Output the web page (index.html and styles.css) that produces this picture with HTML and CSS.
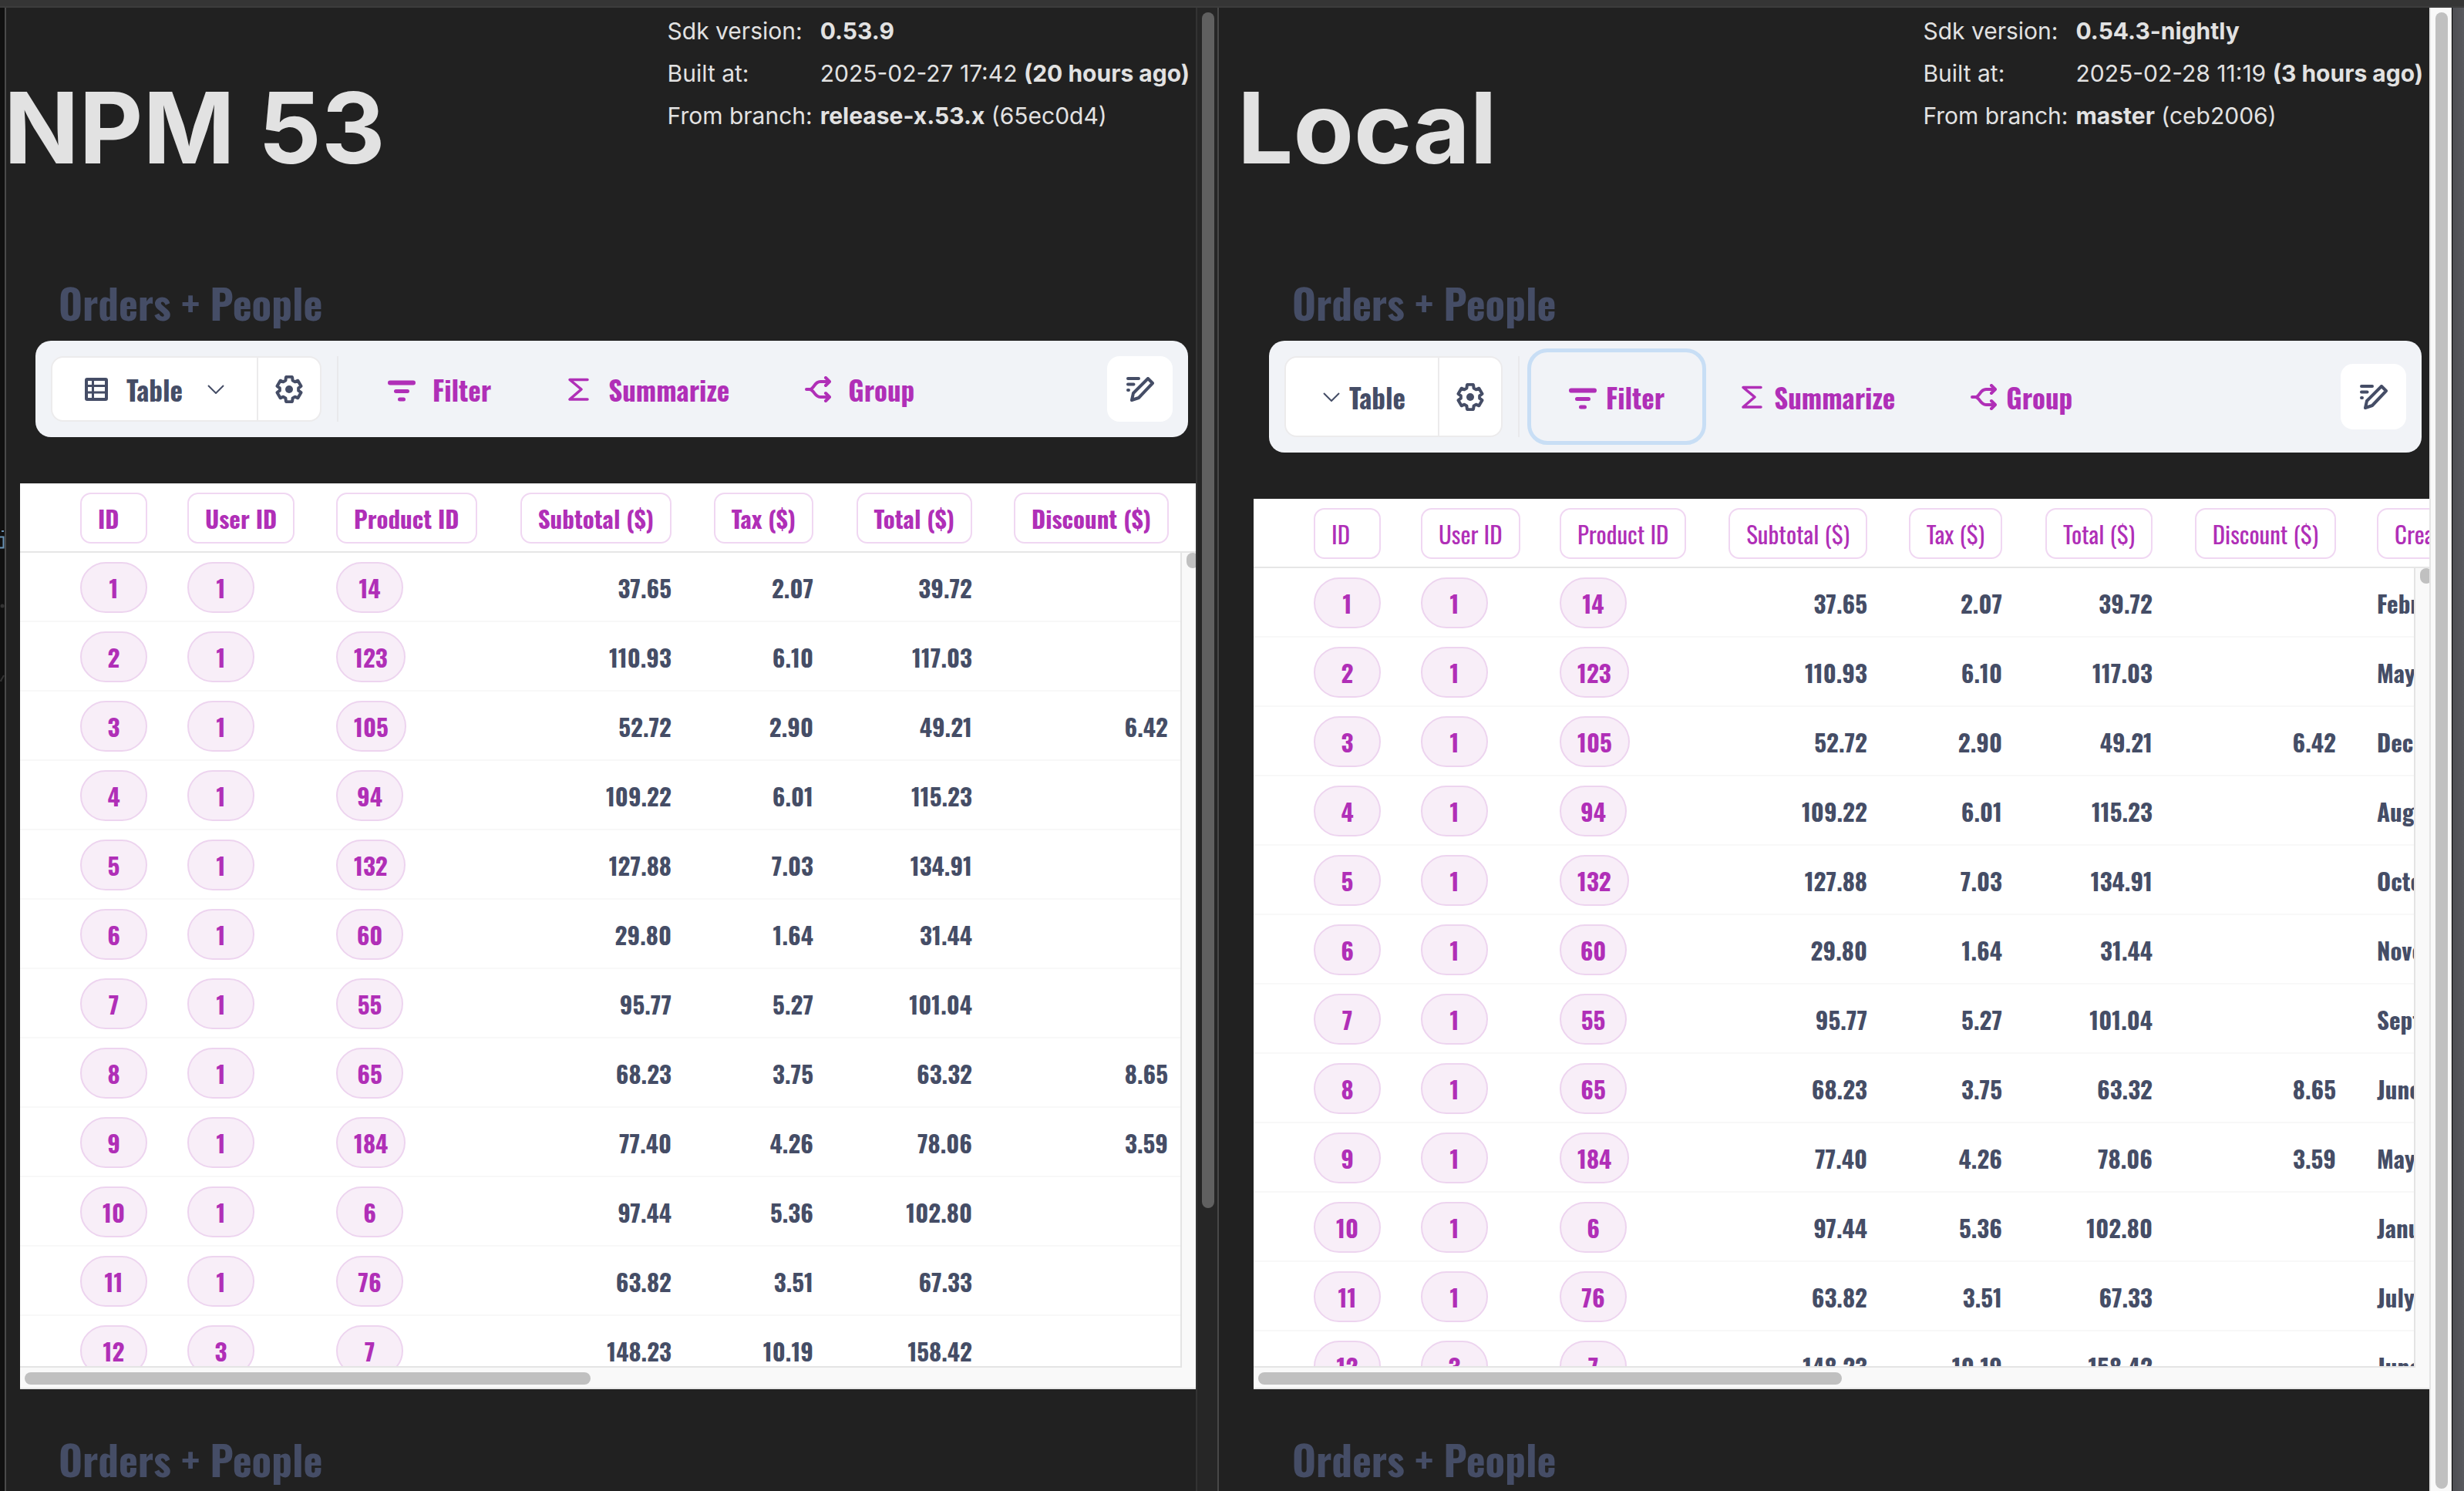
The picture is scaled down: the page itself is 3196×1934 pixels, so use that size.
FILE: index.html
```html
<!DOCTYPE html>
<html lang="en">
<head>
<meta charset="utf-8">
<title>SDK comparison</title>
<link rel="stylesheet" href="styles.css">
</head>
<body>
<svg class="sprite" aria-hidden="true">
  <symbol id="i-table" viewBox="0 0 30 30">
    <rect x="2" y="2" width="26" height="26" rx="1" fill="none" stroke="currentColor" stroke-width="4"/>
    <path d="M2 10.500H28M2 19H28M10.500 2V28" stroke="currentColor" stroke-width="3" fill="none"/>
  </symbol>
  <symbol id="i-chevron" viewBox="0 0 22 12">
    <path d="M1 1L11 11L21 1" fill="none" stroke="currentColor" stroke-width="2"/>
  </symbol>
  <symbol id="i-gear" viewBox="-18 -18 36 36">
    <path d="M-4.600 -11.400L-4.100 -15.500Q-3.900 -16.200 -3 -16.200H3Q3.900 -16.200 4.100 -15.500L4.600 -11.400L7.570 -9.680L11.370 -11.300L15.470 -4.200L12.170 -1.720V1.720L15.470 4.200L11.370 11.300L7.570 9.680L4.600 11.400L4.100 15.500Q3.900 16.200 3 16.200H-3Q-3.900 16.200 -4.100 15.500L-4.600 11.400L-7.570 9.680L-11.370 11.300L-15.470 4.200L-12.170 1.720V-1.720L-15.470 -4.200L-11.370 -11.300L-7.570 -9.680Z" fill="none" stroke="currentColor" stroke-width="4" stroke-linejoin="round"/>
    <circle r="5" fill="currentColor"/>
  </symbol>
  <symbol id="i-filter" viewBox="0 0 36 36">
    <path d="M3 9.500H33" stroke="currentColor" stroke-width="6" stroke-linecap="round"/>
    <path d="M10.500 20.500H25.500M15.500 31H20.500" stroke="currentColor" stroke-width="5" stroke-linecap="round"/>
  </symbol>
  <symbol id="i-sum" viewBox="0 0 32 32">
    <path d="M27 3.500H4L19 16L4 29H27" fill="none" stroke="currentColor" stroke-width="3.500" stroke-linecap="round" stroke-linejoin="round"/>
  </symbol>
  <symbol id="i-group" viewBox="0 0 34 34">
    <path d="M2 17H6C12 17 12 7 20 7H31M6 17C12 17 12 27 20 27H31M27 2L32 7L27 12M27 22L32 27L27 32" fill="none" stroke="currentColor" stroke-width="4" stroke-linecap="round" stroke-linejoin="round"/>
  </symbol>
  <symbol id="i-edit" viewBox="0 0 36 32">
    <path d="M2 2H16M2 9.500H9.500M2 17H3" stroke="currentColor" stroke-width="4" stroke-linecap="round"/>
    <path d="M7 30L9 21L28 2L34 8L16 27Z" fill="none" stroke="currentColor" stroke-width="4" stroke-linejoin="round"/>
  </symbol>
</svg>

<div class="topbar"></div>
<main class="split">
  <div class="desk-left">
    <svg width="6" height="210" viewBox="0 0 6 210" aria-hidden="true">
      <path d="M0 22.500H4.500V36.500H0M2 15H5" fill="none" stroke="#6b93b5" stroke-width="2"/>
      <circle cx="3" cy="112" r="2.500" fill="#333"/>
      <path d="M5 202L1 209L5 216" fill="none" stroke="#333" stroke-width="2"/>
    </svg>
  </div>

  <section class="pane pane--npm">
    <div class="pane__content">
      <header class="head">
        <h1>NPM 53</h1>
        <dl class="info">
          <dt>Sdk version:</dt><dd><b>0.53.9</b></dd>
          <dt>Built at:</dt><dd>2025-02-27 17:42 <b>(20 hours ago)</b></dd>
          <dt>From branch:</dt><dd><b>release-x.53.x</b> (65ec0d4)</dd>
        </dl>
      </header>
      <h2>Orders + People</h2>
      <div class="question">
        <div class="toolbar">
          <div class="segment">
            <button class="segment__main"><svg class="ic-table"><use href="#i-table"/></svg><span>Table</span><svg class="ic-chevron"><use href="#i-chevron"/></svg></button>
            <button class="segment__gear" aria-label="Settings"><svg class="ic"><use href="#i-gear"/></svg></button>
          </div>
          <div class="rule"></div>
          <div class="actions">
            <button class="action"><svg class="ic"><use href="#i-filter"/></svg>Filter</button>
            <button class="action"><svg class="ic-sum"><use href="#i-sum"/></svg>Summarize</button>
            <button class="action"><svg class="ic-group"><use href="#i-group"/></svg>Group</button>
          </div>
          <button class="edit" aria-label="Edit"><svg class="ic-edit"><use href="#i-edit"/></svg></button>
        </div>
        <div class="grid">
          <div class="grid__view">
            <table>
              <colgroup><col class="c192"><col class="c193"><col class="c235"><col class="c254"><col class="c184"><col class="c206"><col></colgroup>
              <thead><tr><th><button>ID</button></th><th><button>User ID</button></th><th><button>Product ID</button></th><th class="num"><button>Subtotal ($)</button></th><th class="num"><button>Tax ($)</button></th><th class="num"><button>Total ($)</button></th><th class="num"><button>Discount ($)</button></th></tr></thead>
              <tbody>
                <tr><td><i>1</i></td><td><i>1</i></td><td><i>14</i></td><td class="num">37.65</td><td class="num">2.07</td><td class="num">39.72</td><td class="num"></td></tr>
                <tr><td><i>2</i></td><td><i>1</i></td><td><i>123</i></td><td class="num">110.93</td><td class="num">6.10</td><td class="num">117.03</td><td class="num"></td></tr>
                <tr><td><i>3</i></td><td><i>1</i></td><td><i>105</i></td><td class="num">52.72</td><td class="num">2.90</td><td class="num">49.21</td><td class="num">6.42</td></tr>
                <tr><td><i>4</i></td><td><i>1</i></td><td><i>94</i></td><td class="num">109.22</td><td class="num">6.01</td><td class="num">115.23</td><td class="num"></td></tr>
                <tr><td><i>5</i></td><td><i>1</i></td><td><i>132</i></td><td class="num">127.88</td><td class="num">7.03</td><td class="num">134.91</td><td class="num"></td></tr>
                <tr><td><i>6</i></td><td><i>1</i></td><td><i>60</i></td><td class="num">29.80</td><td class="num">1.64</td><td class="num">31.44</td><td class="num"></td></tr>
                <tr><td><i>7</i></td><td><i>1</i></td><td><i>55</i></td><td class="num">95.77</td><td class="num">5.27</td><td class="num">101.04</td><td class="num"></td></tr>
                <tr><td><i>8</i></td><td><i>1</i></td><td><i>65</i></td><td class="num">68.23</td><td class="num">3.75</td><td class="num">63.32</td><td class="num">8.65</td></tr>
                <tr><td><i>9</i></td><td><i>1</i></td><td><i>184</i></td><td class="num">77.40</td><td class="num">4.26</td><td class="num">78.06</td><td class="num">3.59</td></tr>
                <tr><td><i>10</i></td><td><i>1</i></td><td><i>6</i></td><td class="num">97.44</td><td class="num">5.36</td><td class="num">102.80</td><td class="num"></td></tr>
                <tr><td><i>11</i></td><td><i>1</i></td><td><i>76</i></td><td class="num">63.82</td><td class="num">3.51</td><td class="num">67.33</td><td class="num"></td></tr>
                <tr><td><i>12</i></td><td><i>3</i></td><td><i>7</i></td><td class="num">148.23</td><td class="num">10.19</td><td class="num">158.42</td><td class="num"></td></tr>
              </tbody>
            </table>
          </div>
          <div class="vbar"><div class="vbar__thumb"></div></div>
          <div class="hbar"><div class="hbar__thumb"></div></div>
        </div>
      </div>
      <h2>Orders + People</h2>
    </div>
    <div class="scroll scroll--dark"><div class="scroll__thumb"></div></div>
  </section>

  <section class="pane pane--local">
    <div class="pane__content">
      <header class="head">
        <h1>Local</h1>
        <dl class="info">
          <dt>Sdk version:</dt><dd><b>0.54.3-nightly</b></dd>
          <dt>Built at:</dt><dd>2025-02-28 11:19 <b>(3 hours ago)</b></dd>
          <dt>From branch:</dt><dd><b>master</b> (ceb2006)</dd>
        </dl>
      </header>
      <h2>Orders + People</h2>
      <div class="question">
        <div class="toolbar">
          <div class="segment">
            <button class="segment__main"><svg class="ic-chevron"><use href="#i-chevron"/></svg><span>Table</span></button>
            <button class="segment__gear" aria-label="Settings"><svg class="ic"><use href="#i-gear"/></svg></button>
          </div>
          <div class="rule"></div>
          <div class="actions">
            <button class="action action--focus"><svg class="ic"><use href="#i-filter"/></svg>Filter</button>
            <button class="action"><svg class="ic-sum"><use href="#i-sum"/></svg>Summarize</button>
            <button class="action"><svg class="ic-group"><use href="#i-group"/></svg>Group</button>
          </div>
          <button class="edit" aria-label="Edit"><svg class="ic-edit"><use href="#i-edit"/></svg></button>
        </div>
        <div class="grid">
          <div class="grid__view">
            <table>
              <colgroup><col class="c192"><col class="c180"><col class="c216"><col class="c236"><col class="c175"><col class="c195"><col class="c238"><col></colgroup>
              <thead><tr><th><button>ID</button></th><th><button>User ID</button></th><th><button>Product ID</button></th><th class="num"><button>Subtotal ($)</button></th><th class="num"><button>Tax ($)</button></th><th class="num"><button>Total ($)</button></th><th class="num"><button>Discount ($)</button></th><th class="date"><button>Created At</button></th></tr></thead>
              <tbody>
                <tr><td><i>1</i></td><td><i>1</i></td><td><i>14</i></td><td class="num">37.65</td><td class="num">2.07</td><td class="num">39.72</td><td class="num"></td><td class="date">February</td></tr>
                <tr><td><i>2</i></td><td><i>1</i></td><td><i>123</i></td><td class="num">110.93</td><td class="num">6.10</td><td class="num">117.03</td><td class="num"></td><td class="date">May</td></tr>
                <tr><td><i>3</i></td><td><i>1</i></td><td><i>105</i></td><td class="num">52.72</td><td class="num">2.90</td><td class="num">49.21</td><td class="num">6.42</td><td class="date">December</td></tr>
                <tr><td><i>4</i></td><td><i>1</i></td><td><i>94</i></td><td class="num">109.22</td><td class="num">6.01</td><td class="num">115.23</td><td class="num"></td><td class="date">August</td></tr>
                <tr><td><i>5</i></td><td><i>1</i></td><td><i>132</i></td><td class="num">127.88</td><td class="num">7.03</td><td class="num">134.91</td><td class="num"></td><td class="date">October</td></tr>
                <tr><td><i>6</i></td><td><i>1</i></td><td><i>60</i></td><td class="num">29.80</td><td class="num">1.64</td><td class="num">31.44</td><td class="num"></td><td class="date">November</td></tr>
                <tr><td><i>7</i></td><td><i>1</i></td><td><i>55</i></td><td class="num">95.77</td><td class="num">5.27</td><td class="num">101.04</td><td class="num"></td><td class="date">September</td></tr>
                <tr><td><i>8</i></td><td><i>1</i></td><td><i>65</i></td><td class="num">68.23</td><td class="num">3.75</td><td class="num">63.32</td><td class="num">8.65</td><td class="date">June</td></tr>
                <tr><td><i>9</i></td><td><i>1</i></td><td><i>184</i></td><td class="num">77.40</td><td class="num">4.26</td><td class="num">78.06</td><td class="num">3.59</td><td class="date">May</td></tr>
                <tr><td><i>10</i></td><td><i>1</i></td><td><i>6</i></td><td class="num">97.44</td><td class="num">5.36</td><td class="num">102.80</td><td class="num"></td><td class="date">January</td></tr>
                <tr><td><i>11</i></td><td><i>1</i></td><td><i>76</i></td><td class="num">63.82</td><td class="num">3.51</td><td class="num">67.33</td><td class="num"></td><td class="date">July</td></tr>
                <tr><td><i>12</i></td><td><i>3</i></td><td><i>7</i></td><td class="num">148.23</td><td class="num">10.19</td><td class="num">158.42</td><td class="num"></td><td class="date">June</td></tr>
              </tbody>
            </table>
          </div>
          <div class="vbar"><div class="vbar__thumb"></div></div>
          <div class="hbar"><div class="hbar__thumb"></div></div>
        </div>
      </div>
      <h2>Orders + People</h2>
    </div>
    <div class="scroll scroll--light"><div class="scroll__thumb"></div></div>
  </section>

  <div class="desk-right"></div>
</main>
</body>
</html>
```
FILE: styles.css
```css
* { box-sizing: border-box; }

body {
  margin: 0;
  height: 100vh;
  display: flex;
  flex-direction: column;
  overflow: hidden;
  background: #212121;
  color: #e2e2e2;
  font-family: Inter, sans-serif;
}

h1, h2, dl, dd { margin: 0; }

button {
  margin: 0;
  padding: 0;
  border: 0;
  background: none;
  color: inherit;
  font: inherit;
}

svg { display: block; flex: none; }
.sprite { position: absolute; width: 0; height: 0; }

/* Window frame */
.topbar {
  flex: none;
  height: 10px;
  background: #353535;
  border-bottom: 2px solid #3c3c3c;
}

.split {
  flex: 1;
  min-height: 0;
  display: grid;
  grid-template-columns: 8px minmax(0, 1573fr) minmax(0, 1599fr) 16px;
}

.desk-left {
  min-height: 0;
  overflow: hidden;
  padding-top: 664px;
  background: #101010;
  border-right: 2px solid #4a4a4a;
}

.desk-right {
  background: linear-gradient(90deg, #4d4e53, #58595e);
  border-left: 1px solid #000;
}

/* Panes */
.pane {
  display: flex;
  min-height: 0;
  overflow: hidden;
}

.pane--npm { border-right: 2px solid #484848; }
.pane__content { flex: 1; min-width: 0; overflow: hidden; }
.pane--npm .pane__content { padding-left: 18px; }
.pane--local .pane__content { padding-left: 45px; }

.scroll { flex: none; width: 28px; padding: 6px 4px 3px 6px; border-left: 2px solid; }
.scroll__thumb { width: 16px; border-radius: 8px; }
.scroll--dark { background: #262626; border-color: #333; }
.scroll--dark .scroll__thumb { height: 81%; background: #606060; }
.scroll--light { width: 29px; background: #f9f9f9; border-color: #e4e4e4; }
.scroll--light .scroll__thumb { height: 100%; background: #c0c0c0; }

/* Heading */
.head {
  display: flex;
  justify-content: space-between;
  align-items: flex-start;
  min-height: 344px;
  margin-left: -21px;
  padding-right: 8px;
}

h1 {
  padding-top: 86px;
  font-size: 128px;
  line-height: 140px;
  font-weight: 700;
  white-space: nowrap;
}

.info {
  display: grid;
  grid-template-columns: auto auto;
  column-gap: 10px;
  padding-top: 3px;
  font-size: 30px;
  line-height: 55px;
  white-space: nowrap;
}

h2 {
  margin-left: 50px;
  color: #454d66;
  font: 700 53px/76px Oswald, sans-serif;
}

/* Question */
.question {
  display: flex;
  flex-direction: column;
  height: 1360px;
  margin: 12px 0 52px;
  font-family: Oswald, sans-serif;
}

.toolbar {
  display: flex;
  align-items: center;
  margin: 0 10px 60px 20px;
  padding: 20px;
  border-radius: 20px;
  background: #f1f3f7;
  color: #454d66;
  font-size: 35px;
  font-weight: 700;
  line-height: 50px;
}

.segment {
  display: flex;
  height: 85px;
  border: 2px solid #ecebec;
  border-radius: 16px;
  background: #fff;
}

.pane--local .segment { height: 105px; }

.segment__main { display: flex; align-items: center; padding: 0 42px; }
.pane--npm .segment__main { gap: 24px; }
.pane--npm .segment__main .ic-chevron { margin: 0 0 0 8px; }
.pane--local .segment__main { gap: 12px; padding-left: 48px; }
.segment__gear { padding: 0 22px; border-left: 2px solid #ecebec; }

.rule { align-self: stretch; width: 2px; margin: 0 20px; background: #e9e9ec; }

.actions { display: flex; flex: 1; gap: 10px; align-self: stretch; color: #b02fb7; }
.action { display: flex; align-items: center; gap: 22px; padding: 0 44px; }
.pane--local .action { gap: 12px; }
.action--focus { border-radius: 16px; outline: 5px solid #c8def5; outline-offset: 5px; }

.edit {
  display: flex;
  align-items: center;
  justify-content: center;
  width: 85px;
  height: 85px;
  border-radius: 16px;
  background: #fff;
}

.ic { width: 36px; height: 36px; }
.ic-table { width: 30px; height: 30px; }
.ic-chevron { width: 22px; height: 12px; }
.ic-sum { width: 32px; height: 32px; }
.ic-group { width: 34px; height: 34px; }
.ic-edit { width: 36px; height: 32px; }

/* Data grid */
.grid {
  position: relative;
  display: flex;
  flex-direction: column;
  flex: 1;
  min-height: 0;
  background: #fff;
  color: #454d66;
  font-size: 31px;
  line-height: 48px;
}

.grid__view { flex: 1; min-height: 0; overflow: hidden; }

table { width: 100%; table-layout: fixed; border-collapse: separate; border-spacing: 0; }

.c175 { width: 175px; }
.c180 { width: 180px; }
.c184 { width: 184px; }
.c192 { width: 192px; }
.c193 { width: 193px; }
.c195 { width: 195px; }
.c206 { width: 206px; }
.c216 { width: 216px; }
.c235 { width: 235px; }
.c236 { width: 236px; }
.c238 { width: 238px; }
.c254 { width: 254px; }

th, td {
  height: 90px;
  padding: 2px 27px 0 25px;
  text-align: left;
  white-space: nowrap;
}

th { border-bottom: 2px solid #e6e6e6; font-weight: 700; }
td { border-bottom: 2px solid #f8f8f8; font-weight: 700; }
.pane--local th { font-weight: 400; }
th:first-child, td:first-child { padding-left: 78px; }
.num { padding-right: 28px; text-align: right; }
.pane--npm .num { padding-right: 29px; }
.pane--npm .num:last-child { padding-right: 36px; }

th button {
  min-width: 87px;
  height: 66px;
  padding: 0 21px;
  border: 2px solid #f0d7f2;
  border-radius: 14px;
  color: #b02fb7;
  text-align: left;
}

td i {
  display: inline-block;
  min-width: 87px;
  padding: 7px 21px;
  border: 2px solid #edd4ef;
  border-radius: 33px;
  background: #f8eef8;
  color: #b02fb7;
  font-style: normal;
  text-align: center;
  vertical-align: middle;
}

.date { overflow: hidden; padding-right: 0; }

.vbar {
  position: absolute;
  top: 90px;
  right: 0;
  bottom: 28px;
  width: 20px;
  overflow: hidden;
  border-left: 2px solid #e4e4e4;
  background: #f9f9f9;
}

.vbar__thumb { width: 16px; height: 20px; margin-left: 6px; border-radius: 8px; background: #c0c0c0; }

.hbar {
  flex: none;
  height: 30px;
  padding: 6px;
  border-top: 2px solid #e4e4e4;
  border-bottom: 2px solid #e8e8e8;
  background: #f9f9f9;
}

.hbar__thumb { width: 50%; height: 16px; border-radius: 8px; background: #c0c0c0; }
.pane--npm .hbar__thumb { width: 734px; }
```
